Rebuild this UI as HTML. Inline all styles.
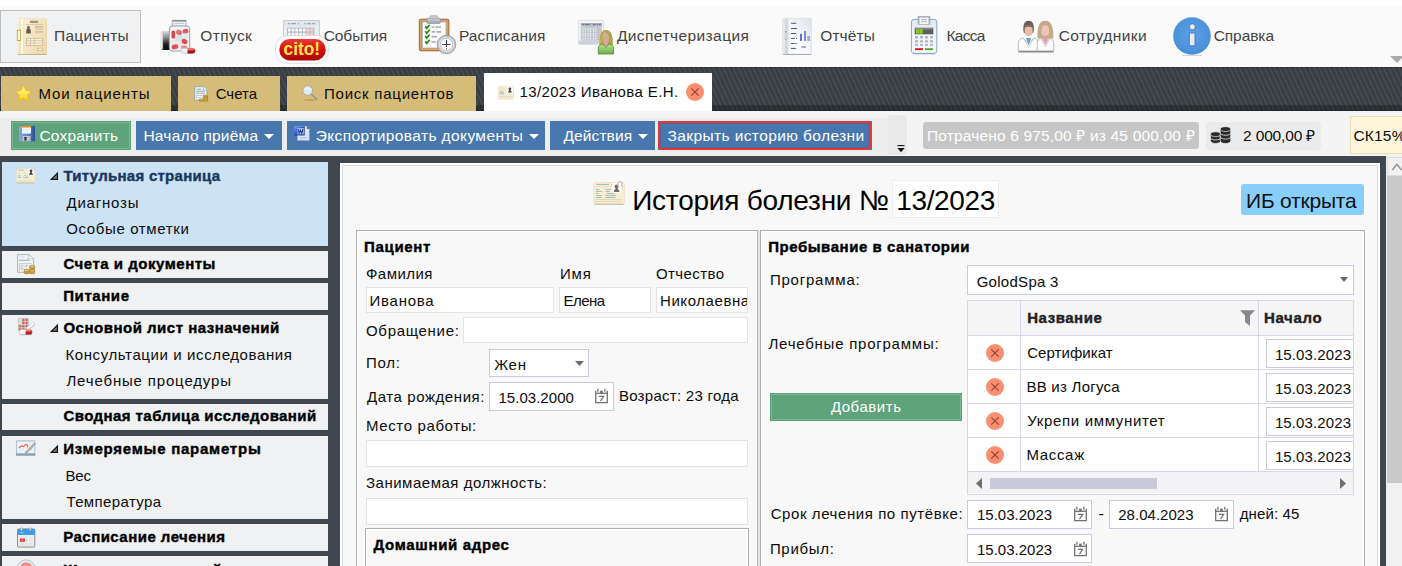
<!DOCTYPE html>
<html lang="ru">
<head>
<meta charset="utf-8">
<title>История болезни № 13/2023</title>
<style>
html,body{margin:0;padding:0;}
body{width:1402px;height:566px;overflow:hidden;position:relative;background:#fff;font-family:'Liberation Sans',sans-serif;}
.a{position:absolute;box-sizing:border-box;}
.t{position:absolute;white-space:pre;line-height:1;font-family:'Liberation Sans',sans-serif;}
svg{position:absolute;overflow:visible;}
.menu{left:0;top:6px;width:1402px;height:61px;background:#fafafa;}
.mact{left:0;top:10px;width:141px;height:53px;background:#f0f1f3;border:1px solid #bdbdbd;}
.band{left:0;top:66.600px;width:1402px;height:44.400px;background-color:#383e44;
 background-image:linear-gradient(rgba(0,0,0,.25) 0,rgba(0,0,0,0) 2px),repeating-linear-gradient(65deg,rgba(255,255,255,0) 0,rgba(255,255,255,0) 2.2px,rgba(255,255,255,.075) 3px,rgba(255,255,255,.075) 3.7px,rgba(255,255,255,0) 4.5px);}
.bandsh{left:0;top:105px;width:1402px;height:6px;background:linear-gradient(rgba(0,0,0,.27) 0,rgba(0,0,0,.27) 4.5px,rgba(0,0,0,.55) 6px);}
.tab{top:76px;height:35px;background:#d6bc79;}
.tabact{top:73px;height:38px;background:#fff;}
.tbar{left:0;top:111px;width:1402px;height:45.200px;background:#f4f4f4;}
.tray{left:0;top:117.800px;width:888px;height:38.400px;background:#ededed;}
.btn{top:121px;height:29px;}
.blue{background:#4877ae;}
.green{background:#5ea37b;box-shadow:inset 0 0 0 1px #5a9f76, inset 0 0 0 2px #7db693;}
.frame{left:0;top:156.200px;width:1387px;height:410px;background:#40474e;}
.li{left:2px;width:326px;background:#f0f1f3;}
.inp{background:#fff;border:1px solid #e3e3e3;}
.cmb{background:#fff;border:1px solid #c9cae0;}
.gb{border:1px solid #aeaeae;box-shadow:inset 0 0 0 1px #fff;}
.hl{height:1px;background:#d5d6e6;}
.vl{width:1px;background:#d5d6e6;}
.x{width:18px;height:18px;border-radius:9px;background:#f98e70;}
</style>
</head>
<body>
<!-- top menu -->
<div class="a menu"></div>
<div class="a mact"></div>
<!-- tab band -->
<div class="a band"></div>
<div class="a bandsh"></div>
<div class="a tab" style="left:1px;width:170px"></div>
<div class="a tab" style="left:178px;width:102px"></div>
<div class="a tab" style="left:287px;width:188.500px"></div>
<div class="a tabact" style="left:483.600px;width:228.800px"></div>
<div class="a x" style="left:686px;top:83px"></div>
<!-- toolbar -->
<div class="a tbar"></div>
<div class="a tray"></div>
<div class="a btn green" style="left:11px;width:120px"></div>
<div class="a btn blue" style="left:136px;width:146px"></div>
<div class="a btn blue" style="left:287px;width:258px"></div>
<div class="a btn blue" style="left:550px;width:105px"></div>
<div class="a btn blue" style="left:657.500px;width:214.500px"></div>
<div class="a" style="left:657.500px;top:121px;width:213.500px;height:28.600px;border:2.200px solid #e2382e;border-radius:4px;box-shadow:inset 0 0 0 1px rgba(110,60,130,.3)"></div>
<div class="a" style="left:888px;top:114.600px;width:18.700px;height:40.800px;background:#e9e9e9;border-radius:0 4px 3px 0"></div>
<div class="a" style="left:923.200px;top:122.300px;width:275.800px;height:26.300px;background:#c6c6c6;border-radius:3px"></div>
<div class="a" style="left:1206px;top:122px;width:115px;height:28px;background:#ebebeb;border-radius:3px"></div>
<div class="a" style="left:1350px;top:116px;width:60px;height:38.400px;background:#fef5da;border:1px solid #ebdfb4"></div>
<!-- dark frame -->
<div class="a frame"></div>
<!-- left list -->
<div class="a li" style="top:162px;height:84.300px;background:#cce2f5"></div>
<div class="a li" style="top:251.200px;height:26.500px"></div>
<div class="a li" style="top:283.200px;height:26.500px"></div>
<div class="a li" style="top:315.200px;height:83.500px"></div>
<div class="a li" style="top:403.700px;height:26.700px"></div>
<div class="a li" style="top:435.700px;height:83px"></div>
<div class="a li" style="top:524.200px;height:26.500px"></div>
<div class="a li" style="top:556.200px;height:20px"></div>
<!-- main panel -->
<div class="a" style="left:340px;top:163px;width:1040.300px;height:410px;background:#fff"></div>
<div class="a" style="left:342.300px;top:165px;width:1036px;height:410px;background:#f8f8f8;border:1px solid #d9d9d9"></div>
<!-- scrollbar -->
<div class="a" style="left:1386px;top:156px;width:16px;height:410px;background:#f1f1f1"></div>
<div class="a" style="left:1386.600px;top:175.800px;width:16px;height:307.500px;background:#c9c9c9"></div>
<div class="a" style="left:1387px;top:157px;width:16px;height:19px;background:#f1f1f1;border:1px solid #dcdcdc"></div>
<!-- title -->
<div class="a" style="left:892.300px;top:180.300px;width:106.500px;height:37.700px;background:#fff;border:1px solid #ececec"></div>
<div class="a" style="left:1241.200px;top:184px;width:122.800px;height:30.700px;background:#87cefa;border-radius:3px"></div>
<!-- patient group -->
<div class="a gb" style="left:356px;top:230px;width:402px;height:345px"></div>
<div class="a inp" style="left:366px;top:287.400px;width:188px;height:26px"></div>
<div class="a inp" style="left:559px;top:287.400px;width:92px;height:26px"></div>
<div class="a inp" style="left:656px;top:287.400px;width:92px;height:26px"></div>
<div class="a inp" style="left:463.400px;top:317.400px;width:284.600px;height:26px"></div>
<div class="a cmb" style="left:489.400px;top:349.400px;width:99.600px;height:27.400px"></div>
<div class="a cmb" style="left:489.400px;top:382.400px;width:124.600px;height:28.200px"></div>
<div class="a inp" style="left:366px;top:440px;width:382px;height:27.400px"></div>
<div class="a inp" style="left:366px;top:497.600px;width:382px;height:27px"></div>
<div class="a gb" style="left:365px;top:528px;width:384px;height:50px"></div>
<div class="a" style="left:758px;top:231px;width:2px;height:340px;background:#e9e9e9"></div>
<!-- stay group -->
<div class="a gb" style="left:760px;top:230px;width:604.500px;height:345px"></div>
<div class="a cmb" style="left:967.400px;top:265.400px;width:386.600px;height:29.200px"></div>
<!-- grid -->
<div class="a" style="left:967.400px;top:300px;width:386.600px;height:194.600px;background:#fff;border:1px solid #d5d6e6"></div>
<div class="a" style="left:968.400px;top:301px;width:384.600px;height:34px;background:#f5f5f6"></div>
<div class="a" style="left:968.400px;top:471.400px;width:384.600px;height:22px;background:#f3f3f6"></div>
<div class="a hl" style="left:968px;top:335px;width:385px"></div>
<div class="a hl" style="left:968px;top:369px;width:385px"></div>
<div class="a hl" style="left:968px;top:403px;width:385px"></div>
<div class="a hl" style="left:968px;top:437px;width:385px"></div>
<div class="a hl" style="left:968px;top:471px;width:385px"></div>
<div class="a vl" style="left:1020px;top:301px;height:170px"></div>
<div class="a vl" style="left:1258px;top:301px;height:170px"></div>
<div class="a x" style="left:986px;top:344px"></div>
<div class="a x" style="left:986px;top:378px"></div>
<div class="a x" style="left:986px;top:412px"></div>
<div class="a x" style="left:986px;top:446px"></div>
<div class="a cmb" style="left:1266.400px;top:339px;width:86.600px;height:28.800px;border-right:0"></div>
<div class="a cmb" style="left:1266.400px;top:373px;width:86.600px;height:28.800px;border-right:0"></div>
<div class="a cmb" style="left:1266.400px;top:407px;width:86.600px;height:28.800px;border-right:0"></div>
<div class="a cmb" style="left:1266.400px;top:441px;width:86.600px;height:28.800px;border-right:0"></div>
<div class="a" style="left:990px;top:478px;width:167px;height:11px;background:#c8cada"></div>
<!-- add button -->
<div class="a green" style="left:770px;top:393px;width:192px;height:28px"></div>
<!-- dates -->
<div class="a cmb" style="left:967.300px;top:500.400px;width:124.500px;height:28.200px"></div>
<div class="a cmb" style="left:1109.400px;top:500.400px;width:124.600px;height:28.200px"></div>
<div class="a cmb" style="left:967.300px;top:534.200px;width:124.500px;height:28.400px"></div>
<!-- ===== menu icons ===== -->
<!-- patients card -->
<svg style="left:17px;top:18px" width="30" height="37" viewBox="0 0 30 37">
<defs><linearGradient id="gcard" x1="0" y1="0" x2="1" y2=".6"><stop offset="0" stop-color="#fdf4de"/><stop offset="1" stop-color="#efdcae"/></linearGradient></defs>
<rect x="0.800" y="0.400" width="28.600" height="36" rx="1" fill="url(#gcard)"/>
<path d="M0.800 36.400h28.600" stroke="#bfae8b" stroke-width="1"/><path d="M29.400 1v35" stroke="#e2cf9f" stroke-width=".7"/><path d="M1 0.500h28" stroke="#eadcb8" stroke-width=".6"/>
<rect x="2.300" y="0.600" width="1.300" height="35.500" fill="#f1e0b6"/><rect x="4.200" y="0.600" width="1.700" height="35.500" fill="#fffdf6"/><rect x="6.300" y="0.600" width="1.200" height="35.500" fill="#f4e5bf"/>
<rect x="0.300" y="12.200" width="3.300" height="10.300" fill="#fbf6e6" stroke="#c9a227" stroke-width=".9"/>
<rect x="13" y="2.800" width="8" height="2.200" fill="#958b76"/><path d="M15 2.800v2.200M17.200 2.800v2.200M19.200 2.800v2.200" stroke="#c9bfa8" stroke-width=".5"/>
<path d="M9 6.600h17" stroke="#cbbf9f" stroke-width=".8"/>
<path d="M9.200 15.600v-3.400q0-1 1-1.200v-1.800q0-1.300 1.300-1.300t1.300 1.300v1.800q1 .2 1 1.200v3.400z" fill="#6b5d4a"/>
<rect x="18" y="8" width="7.900" height="1.900" fill="#cdc3aa"/><rect x="18" y="10.800" width="7.900" height=".9" fill="#cdc3aa"/><rect x="18" y="13" width="7.900" height="1.800" fill="#cdc3aa"/>
<rect x="9.300" y="20.300" width="16.400" height="7.200" fill="#fbf1d8" stroke="#c6b999" stroke-width=".8"/><path d="M9.300 22.700h16.400M9.300 25.100h16.400M13.500 20.300v7.200M17.300 20.300v7.200" stroke="#c6b999" stroke-width=".7" fill="none"/>
<rect x="20.400" y="30.200" width="5.300" height="2.400" fill="#fbf3df" stroke="#c6b999" stroke-width=".8"/>
</svg>
<!-- pills jar -->
<svg style="left:161px;top:19px" width="36" height="36" viewBox="0 0 36 36">
<defs><linearGradient id="gcap" x1="0" y1="0" x2="0" y2="1"><stop offset="0" stop-color="#dcdcdc"/><stop offset=".35" stop-color="#8a8a8a"/><stop offset=".7" stop-color="#1c1c1c"/><stop offset="1" stop-color="#0a0a0a"/></linearGradient>
<linearGradient id="gcaps" x1="0" y1="0" x2="0" y2="1"><stop offset="0" stop-color="#e64a4a"/><stop offset=".5" stop-color="#c81818"/><stop offset="1" stop-color="#8e0c0c"/></linearGradient></defs>
<rect x="0.200" y="12" width="9" height="19" rx="1.500" fill="url(#gcap)"/><rect x="0" y="12.500" width="1.800" height="18" rx=".9" fill="#f4f4f4" stroke="#b0b0b0" stroke-width=".4"/>
<rect x="11.200" y="1.400" width="13.800" height="6" rx="1" fill="#eef1f4" stroke="#9aa3ad" stroke-width=".8"/><rect x="11" y="1.200" width="14.200" height="1.400" rx=".6" fill="#767e88"/>
<path d="M12.500 4.500h11" stroke="#c5ccd4" stroke-width="1"/>
<path d="M8.300 10q0-3 3-3h14.400q3 0 3 3v19q0 3-3 3h-14.400q-3 0-3-3z" fill="#f1f3f6" stroke="#8b97a8" stroke-width=".9"/>
<g>
<rect x="10.500" y="11.500" width="3.600" height="8" rx="1.600" fill="#d9464c"/><rect x="15" y="11" width="6" height="5" rx="2.200" fill="#e26e73" transform="rotate(25 18 13.500)"/><rect x="21.500" y="10" width="6" height="4.600" rx="2.200" fill="#e0585e" transform="rotate(-15 24.500 12.300)"/>
<rect x="20" y="14.500" width="6.500" height="5.500" rx="2.500" fill="#e9ecef" stroke="#c3c8ce" stroke-width=".4"/><rect x="14.500" y="17" width="6" height="5" rx="2.300" fill="#dfe3e7" stroke="#c3c8ce" stroke-width=".4"/>
<rect x="20.500" y="20" width="6" height="5" rx="2.300" fill="#dd4f55" transform="rotate(20 23.500 22.500)"/><rect x="10.500" y="21" width="5" height="4.600" rx="2.200" fill="#eceff2" stroke="#c3c8ce" stroke-width=".4"/>
<rect x="10.500" y="25.500" width="7" height="4.600" rx="2.200" fill="#de5359" transform="rotate(-12 14 27.800)"/><rect x="17" y="23.500" width="5" height="4.400" rx="2.100" fill="#e6e9ec" stroke="#c3c8ce" stroke-width=".4"/><rect x="20" y="26.500" width="6.500" height="4" rx="2" fill="#e88c90"/>
</g>
<rect x="20" y="29.200" width="14.200" height="5.300" rx="2.650" fill="#eef0f2" stroke="#aab0b8" stroke-width=".5"/><path d="M26.500 29.200h5.050a2.650 2.650 0 0 1 0 5.300h-5.050z" fill="url(#gcaps)"/>
<path d="M21.500 30.600h11" stroke="rgba(255,255,255,.55)" stroke-width=".8"/>
</svg>
<!-- calendar + cito -->
<svg style="left:283px;top:20px" width="38" height="22" viewBox="0 0 38 22">
<rect x="0.500" y="0.500" width="36" height="21" fill="#e9edf2" stroke="#c9ced6"/>
<rect x="1" y="1" width="35" height="5" fill="#e1e6ec"/>
<path d="M5 3.700h2M8 3.700h5M15 3.700h1M21 3.700h1.500M24 3.700h4M29 3.700h3" stroke="#9099a5" stroke-width="1"/>
<rect x="4" y="7.600" width="27.400" height="14" fill="#b7bdc6"/>
<rect x="5.0" y="8.6" width="2.700" height="2.900" fill="#f6f8fa"/><rect x="8.7" y="8.6" width="2.700" height="2.900" fill="#f6f8fa"/><rect x="12.4" y="8.6" width="2.700" height="2.900" fill="#f6f8fa"/><rect x="16.1" y="8.6" width="2.700" height="2.900" fill="#f6f8fa"/><rect x="19.8" y="8.6" width="2.700" height="2.900" fill="#f6f8fa"/><rect x="23.5" y="8.6" width="2.700" height="2.900" fill="#fbd3d6"/><rect x="27.2" y="8.6" width="2.700" height="2.900" fill="#fbd3d6"/><rect x="5.0" y="12.8" width="2.700" height="2.900" fill="#f6f8fa"/><rect x="8.7" y="12.8" width="2.700" height="2.900" fill="#f6f8fa"/><rect x="12.4" y="12.8" width="2.700" height="2.900" fill="#f6f8fa"/><rect x="16.1" y="12.8" width="2.700" height="2.900" fill="#f6f8fa"/><rect x="19.8" y="12.8" width="2.700" height="2.900" fill="#f6f8fa"/><rect x="23.5" y="12.8" width="2.700" height="2.900" fill="#fbd3d6"/><rect x="27.2" y="12.8" width="2.700" height="2.900" fill="#fbd3d6"/><rect x="5.0" y="17.0" width="2.700" height="2.900" fill="#f6f8fa"/><rect x="8.7" y="17.0" width="2.700" height="2.900" fill="#f6f8fa"/><rect x="12.4" y="17.0" width="2.700" height="2.900" fill="#f6f8fa"/><rect x="16.1" y="17.0" width="2.700" height="2.900" fill="#f6f8fa"/><rect x="19.8" y="17.0" width="2.700" height="2.900" fill="#f6f8fa"/><rect x="23.5" y="17.0" width="2.700" height="2.900" fill="#fbd3d6"/><rect x="27.2" y="17.0" width="2.700" height="2.900" fill="#fbd3d6"/>
</svg>
<svg style="left:275px;top:35px" width="54" height="29" viewBox="0 0 54 29">
<defs><linearGradient id="gcito" x1="0" y1="0" x2="0" y2="1"><stop offset="0" stop-color="#ee3b33"/><stop offset=".5" stop-color="#d4100e"/><stop offset="1" stop-color="#a90606"/></linearGradient></defs>
<rect x="0.700" y="0.700" width="52.600" height="27.600" rx="11" fill="#fdfdfd" stroke="#dcdcdc" stroke-width=".9"/>
<rect x="4.300" y="4" width="46.400" height="21.400" rx="10.500" fill="url(#gcito)"/>
<text x="8.600" y="19.500" font-family="'Liberation Sans',sans-serif" font-weight="700" font-size="18" fill="#fde64a" textLength="36.500" lengthAdjust="spacingAndGlyphs">cito!</text>
</svg>
<!-- clipboard + clock -->
<svg style="left:419px;top:16px" width="38" height="39" viewBox="0 0 38 39">
<defs><linearGradient id="gclip" x1="0" y1="0" x2="0" y2="1"><stop offset="0" stop-color="#d3d6da"/><stop offset="1" stop-color="#9ea3a9"/></linearGradient></defs>
<rect x="0.300" y="3.200" width="29.600" height="31.600" rx="1.500" fill="#c98c4e" stroke="#9a6230" stroke-width=".9"/>
<rect x="1.600" y="4.500" width="27" height="29" rx="1" fill="none" stroke="#dfa96c" stroke-width=".8"/>
<rect x="3.400" y="6" width="23.600" height="26" fill="#fcfcfd" stroke="#b3bfcc" stroke-width=".9"/>
<rect x="8" y="2.200" width="13.300" height="5.200" rx="1" fill="url(#gclip)" stroke="#80868d" stroke-width=".6"/><rect x="11" y="-0.300" width="7.600" height="3.200" rx=".8" fill="#c9ccd0" stroke="#8c9197" stroke-width=".5"/>
<g stroke="#27890f" stroke-width="1.700" fill="none"><path d="M6.200 10.400l1.600 2 2.900-3.600"/><path d="M6.200 15.200l1.600 2 2.900-3.600"/><path d="M6.200 20.100l1.600 2 2.900-3.600"/><path d="M6.200 25.400l1.600 2 2.900-3.600"/></g>
<g stroke="#a9acb0" stroke-width="1.700"><path d="M12.500 11h3M16.500 11h5.500M12.500 15.800h3.500M17.500 15.800h4.500M12.500 20.700h5.500M12.500 26h4.500"/></g>
<circle cx="27.500" cy="28.500" r="9.300" fill="#c3c6ca" stroke="#8f9398" stroke-width=".8"/><circle cx="27.500" cy="28.500" r="7.600" fill="#e4e6e8"/>
<circle cx="27.500" cy="28.500" r="6.200" fill="#fdfdfd" stroke="#a5a9ae" stroke-width=".6"/>
<path d="M27.500 23.800v7.500M23.300 28.500h8.200" stroke="#2e2e2e" stroke-width=".9" fill="none"/><circle cx="27.500" cy="32.800" r=".6" fill="#333"/>
</svg>
<!-- calendar + woman -->
<svg style="left:578px;top:20px" width="37" height="35" viewBox="0 0 37 35">
<defs><linearGradient id="gwom" x1="0" y1="0" x2="0" y2="1"><stop offset="0" stop-color="#b9e48c"/><stop offset="1" stop-color="#6fae4c"/></linearGradient></defs>
<rect x="0.500" y="0.400" width="25.200" height="24" rx=".8" fill="#f3f5f7" stroke="#d3d7dc" stroke-width=".8"/>
<rect x="1" y="20.800" width="24.200" height="3.400" fill="#cdd1d6"/>
<rect x="2.800" y="3" width="21.200" height="17.700" fill="#c3c9d1"/>
<rect x="2.800" y="3" width="21.200" height="2.800" fill="#aab1bb"/>
<path d="M4.500 4.400h1.500M7 4.400h4.500M15 4.400h2.500M19 4.400h1M21 4.400h1.500" stroke="#5f6670" stroke-width=".9"/>
<rect x="4.6" y="8.2" width="1.100" height="1.100" fill="#fbfcfd"/><rect x="6.8" y="8.2" width="1.100" height="1.100" fill="#fbfcfd"/><rect x="9.8" y="8.2" width="1.100" height="1.100" fill="#fbfcfd"/><rect x="12" y="8.2" width="1.100" height="1.100" fill="#fbfcfd"/><rect x="15" y="8.2" width="1.100" height="1.100" fill="#fbfcfd"/><rect x="17.2" y="8.2" width="1.100" height="1.100" fill="#fbfcfd"/><rect x="20.2" y="8.2" width="1.100" height="1.100" fill="#f0a3a8"/><rect x="4.6" y="10.4" width="1.100" height="1.100" fill="#fbfcfd"/><rect x="6.8" y="10.4" width="1.100" height="1.100" fill="#fbfcfd"/><rect x="9.8" y="10.4" width="1.100" height="1.100" fill="#fbfcfd"/><rect x="12" y="10.4" width="1.100" height="1.100" fill="#fbfcfd"/><rect x="15" y="10.4" width="1.100" height="1.100" fill="#fbfcfd"/><rect x="17.2" y="10.4" width="1.100" height="1.100" fill="#fbfcfd"/><rect x="20.2" y="10.4" width="1.100" height="1.100" fill="#f0a3a8"/><rect x="4.6" y="13.2" width="1.100" height="1.100" fill="#fbfcfd"/><rect x="6.8" y="13.2" width="1.100" height="1.100" fill="#fbfcfd"/><rect x="9.8" y="13.2" width="1.100" height="1.100" fill="#fbfcfd"/><rect x="12" y="13.2" width="1.100" height="1.100" fill="#fbfcfd"/><rect x="15" y="13.2" width="1.100" height="1.100" fill="#fbfcfd"/><rect x="17.2" y="13.2" width="1.100" height="1.100" fill="#fbfcfd"/><rect x="20.2" y="13.2" width="1.100" height="1.100" fill="#f0a3a8"/><rect x="4.6" y="15.4" width="1.100" height="1.100" fill="#fbfcfd"/><rect x="6.8" y="15.4" width="1.100" height="1.100" fill="#fbfcfd"/><rect x="9.8" y="15.4" width="1.100" height="1.100" fill="#fbfcfd"/><rect x="12" y="15.4" width="1.100" height="1.100" fill="#fbfcfd"/><rect x="15" y="15.4" width="1.100" height="1.100" fill="#fbfcfd"/><rect x="17.2" y="15.4" width="1.100" height="1.100" fill="#fbfcfd"/><rect x="20.2" y="15.4" width="1.100" height="1.100" fill="#f0a3a8"/><rect x="4.6" y="18.2" width="1.100" height="1.100" fill="#fbfcfd"/><rect x="6.8" y="18.2" width="1.100" height="1.100" fill="#fbfcfd"/><rect x="9.8" y="18.2" width="1.100" height="1.100" fill="#fbfcfd"/><rect x="12" y="18.2" width="1.100" height="1.100" fill="#fbfcfd"/><rect x="15" y="18.2" width="1.100" height="1.100" fill="#fbfcfd"/><rect x="17.2" y="18.2" width="1.100" height="1.100" fill="#fbfcfd"/><rect x="20.2" y="18.2" width="1.100" height="1.100" fill="#f0a3a8"/>
<path d="M21.600 25.500q-.8-15.500 6.500-15.500t6.700 15.500z" fill="#b3a04e"/><path d="M23 24q0-11 5-12" stroke="#d1c06c" stroke-width="1" fill="none"/>
<path d="M25 17.500q0-4.700 2.900-4.700t2.900 4.700q0 5-1.300 6.500v2h-3.200v-2q-1.300-1.500-1.300-6.500z" fill="#dba99c"/>
<path d="M20.300 34v-5.500q0-4 4.600-4.600l3 3.600 3-3.600q4.600.6 4.600 4.600v5.500z" fill="url(#gwom)" stroke="#4f8a35" stroke-width=".8"/>
<path d="M27.900 24.500v4" stroke="#c68e82" stroke-width=".8"/>
</svg>
<!-- report -->
<svg style="left:783px;top:18px" width="30" height="38" viewBox="0 0 30 38">
<defs><linearGradient id="grep" x1="1" y1="0" x2="0" y2="1"><stop offset="0" stop-color="#dde3e9"/><stop offset=".5" stop-color="#f7f8fa"/><stop offset="1" stop-color="#ffffff"/></linearGradient>
<linearGradient id="grep2" x1="0" y1="0" x2="1" y2="0"><stop offset="0" stop-color="#eef0f3"/><stop offset=".6" stop-color="#cdd3d9"/><stop offset="1" stop-color="#e4e8ec"/></linearGradient></defs>
<rect x="-0.400" y="0.400" width="28.700" height="35.800" rx=".8" fill="url(#grep)" stroke="#d5d9de" stroke-width=".7"/>
<path d="M0 36.500h28.300" stroke="#a9adb2" stroke-width="1"/>
<rect x="0" y="0.800" width="5.800" height="35.200" fill="url(#grep2)"/>
<path d="M2.800 13v1.500M2.800 20.500v1" stroke="#666" stroke-width=".8"/>
<g stroke="#4f565e" stroke-width="1"><path d="M8 5.300h5.200M8 10.500h6M8 15.500h5.400M8 20.400h4M13 20.400h1M8 25.500h3.500M12.300 25.500h1.500M8 30.400h5.200"/></g>
<rect x="17" y="15.900" width="2" height="7" fill="#686ec0"/><rect x="21" y="13" width="2" height="9.900" fill="#8388dc"/><rect x="24.200" y="18" width="2.800" height="4.900" fill="#a3a7ea"/>
<rect x="18.400" y="28.200" width="4.600" height="1.600" fill="#9aa0a8"/>
</svg>
<!-- calculator -->
<svg style="left:911px;top:16px" width="27" height="39" viewBox="0 0 27 39">
<defs><linearGradient id="gcalc" x1="0" y1="0" x2="0" y2="1"><stop offset="0" stop-color="#dbe8f4"/><stop offset=".4" stop-color="#eef3f8"/><stop offset="1" stop-color="#f6f8fb"/></linearGradient></defs>
<rect x="0.400" y="3.400" width="25.400" height="34" rx="2.600" fill="url(#gcalc)" stroke="#7d9ec2" stroke-width=".9"/>
<path d="M2 37.800h22" stroke="#8aa0b8" stroke-width=".8"/>
<rect x="7" y="0.300" width="12" height="8" fill="#b5b7ba" stroke="#9a9da0" stroke-width=".5"/>
<rect x="8.600" y="1.700" width="8.800" height="6.200" fill="#fafafa"/><path d="M10 3.600h6M10 5.600h6" stroke="#aeb1b5" stroke-width="1"/>
<rect x="4" y="12" width="18" height="6" fill="#5e5f60" stroke="#48494a" stroke-width=".5"/><path d="M4.300 12.800h17.400" stroke="#c9cbcd" stroke-width=".6"/>
<rect x="4.800" y="13.200" width="7" height="4.300" fill="#6f9f2a"/><path d="M5.600 13v4.800M7.400 13v4.800M9.300 13v4.800M11 13v4.800" stroke="#a6ea2e" stroke-width=".8"/>
<rect x="4" y="20" width="3" height="2.5" fill="#b4b8bd"/><rect x="9" y="20" width="3" height="2.5" fill="#b4b8bd"/><rect x="14" y="20" width="3" height="2.5" fill="#b4b8bd"/><rect x="19" y="20" width="3" height="2.5" fill="#b4b8bd"/><rect x="4" y="24.2" width="3" height="2.3" fill="#b4b8bd"/><rect x="9" y="24.2" width="3" height="2.3" fill="#b4b8bd"/><rect x="14" y="24.2" width="3" height="2.3" fill="#b4b8bd"/><rect x="19" y="24.2" width="3" height="2.3" fill="#b4b8bd"/><rect x="4" y="27.9" width="3" height="2" fill="#b4b8bd"/><rect x="9" y="27.9" width="3" height="2" fill="#b4b8bd"/><rect x="14" y="27.9" width="3" height="2" fill="#b4b8bd"/><rect x="19" y="27.9" width="3" height="2" fill="#b4b8bd"/>
<rect x="4" y="32.200" width="8" height="1.900" fill="#dc1a1a"/><rect x="14" y="32.200" width="8" height="1.900" fill="#56a82c"/>
</svg>
<!-- two doctors -->
<svg style="left:1018px;top:21px" width="37" height="33" viewBox="0 0 37 33">
<path d="M5.300 9q-.5-9.200 5.300-9.200t5.300 9.200l-.6 3h-9.400z" fill="#6d5d5a"/>
<path d="M6.600 8q0-4 4-4t4 4v3.500q0 3.400-4 3.400t-4-3.400z" fill="#e9bcab"/>
<path d="M6.300 7q1-3 4.300-3t4.300 3q-1.500-1.500-4.300-1.500t-4.300 1.500z" fill="#6d5d5a"/>
<path d="M0.300 30v-7.500q0-4.500 5-5.500l5.300 6 5.300-6q4.300 1 4.300 5.500v7.500z" fill="#fbfbfb" stroke="#a9a9a9" stroke-width=".8"/>
<path d="M8 17l2.600 7.500 2.600-7.500z" fill="#6f9fce"/><path d="M5.500 17.500l5.100 9 5.100-9" stroke="#c5c5c5" stroke-width=".8" fill="none"/>
<path d="M19.400 17.500q-.8-17.700 7.900-17.700t8 17.700z" fill="#c2ab8a"/>
<path d="M23.400 9q0-4.800 3.800-4.800t3.800 4.800v2.500q0 3.400-3.800 3.400t-3.800-3.400z" fill="#ecc5b4"/>
<path d="M19.200 30v-7.500q0-4.500 4.500-5.500l3.700 6 3.700-6q4.600 1 4.600 5.500v7.500z" fill="#fbfbfb" stroke="#a9a9a9" stroke-width=".8"/>
<path d="M24.800 17l2.600 7 2.600-7z" fill="#e79aac"/><path d="M23 17.500l4.400 8.500 4.400-8.500" stroke="#c5c5c5" stroke-width=".8" fill="none"/>
<path d="M0.500 30.800h35" stroke="#8a8a8a" stroke-width="1.500"/>
</svg>
<!-- info -->
<svg style="left:1172.700px;top:17.400px" width="38" height="39" viewBox="0 0 38 39">
<defs><radialGradient id="ginfo" cx=".5" cy=".45" r=".6"><stop offset="0" stop-color="#5d9fe2"/><stop offset=".8" stop-color="#4b92db"/><stop offset="1" stop-color="#3f87d3"/></radialGradient></defs>
<path d="M9 38.300h20" stroke="#c8c8c8" stroke-width=".9"/>
<circle cx="19" cy="19" r="18.800" fill="url(#ginfo)"/>
<circle cx="19.300" cy="9.800" r="3.100" fill="#ececec" stroke="#3d7dc8" stroke-width="1"/>
<rect x="16.300" y="16" width="5.700" height="12.800" fill="#ebebeb" stroke="#3d7dc8" stroke-width="1"/>
</svg>
<svg style="left:1390px;top:56px" width="14" height="8" viewBox="0 0 14 8"><path d="M0 0h14l-7 7z" fill="#ababab"/></svg>
<!-- ===== tab icons ===== -->
<svg style="left:15.400px;top:84.700px" width="17" height="17" viewBox="0 0 17 17"><defs><linearGradient id="gstar" x1="0" y1="0" x2="0" y2="1"><stop offset="0" stop-color="#fff3b0"/><stop offset=".45" stop-color="#ffe960"/><stop offset="1" stop-color="#ffdc08"/></linearGradient></defs><path d="M8.50 0.70L11.03 5.32L16.20 6.30L12.59 10.13L13.26 15.35L8.50 13.10L3.74 15.35L4.41 10.13L0.80 6.30L5.97 5.32z" fill="url(#gstar)" stroke="#eabc28" stroke-width="1" stroke-linejoin="round"/></svg>
<svg style="left:194px;top:85.500px" width="15" height="16" viewBox="0 0 15 16">
<path d="M0.600 0.600h8.900l3.500 3.500v10.100h-12.400z" fill="#e6eff3" stroke="#8fa0a9" stroke-width=".8"/><path d="M9.500 0.600v3.500h3.500" fill="#f8fbfc" stroke="#8fa0a9" stroke-width=".6"/>
<path d="M2.300 3.200h.8M3.800 3.200h3M2.300 5.200h8.500M2.300 7.200h3M6.500 7.200h4" stroke="#8d999f" stroke-width=".8"/>
<rect x="2.800" y="9.500" width="7" height="2.300" fill="#f4f8fa" stroke="#a9b8c0" stroke-width=".6"/>
<g fill="#b88f2c" stroke="#8f6c1c" stroke-width=".4"><rect x="9.500" y="9" width="4.300" height="2.100" rx="1"/><rect x="9.500" y="11.100" width="4.300" height="2.100" rx="1"/><rect x="9.500" y="13.200" width="4.300" height="2.100" rx="1"/><rect x="5.200" y="13" width="4.300" height="2.300" rx="1"/></g>
<path d="M10.300 9.800h2.700M10.300 11.900h2.700M10.300 14h2.700M6 13.900h2.700" stroke="#ecd07a" stroke-width=".7"/>
</svg>
<svg style="left:301.500px;top:85px" width="16" height="16" viewBox="0 0 16 16">
<ellipse cx="8" cy="15" rx="6.500" ry=".9" fill="rgba(120,100,50,.25)"/>
<path d="M9.300 9.200l5.200 4.900" stroke="#9a9a98" stroke-width="1.700" stroke-linecap="round"/>
<circle cx="5.700" cy="5.500" r="4.900" fill="#e2eaea" stroke="#ada58f" stroke-width="1"/><path d="M2.300 4.300q3.400-1 6.800 0" stroke="#f7fafa" stroke-width="1" fill="none"/>
</svg>
<svg style="left:498.200px;top:85.500px" width="16" height="13.500" viewBox="0 0 16 13.500">
<rect x="0.300" y="0.300" width="15.200" height="12.900" rx="1.200" fill="#f4ead0" stroke="#ebdfbf" stroke-width=".6"/>
<path d="M1.600 6h4.300M1.600 7.800h4.300" stroke="#86b3ba" stroke-width=".8"/><path d="M2 3.800h4" stroke="#e6dcc2" stroke-width=".7"/>
<rect x="8.800" y="0.600" width="6.300" height="6.800" rx=".6" fill="#fdfcf8"/>
<path d="M10 6.600q0-1.700 1.200-2v-.4q-.7-.5-.7-1.400 0-1.300 1.400-1.300t1.400 1.300q0 .9-.7 1.400v.4q1.200.3 1.200 2z" fill="#4a4a4a"/>
<path d="M1.800 10.700h12" stroke="#e3d9bd" stroke-width=".9"/>
</svg>
<!-- close x in tab -->
<svg style="left:686px;top:83px" width="18" height="18" viewBox="0 0 18 18"><path d="M5.300 5.300l7.400 7.400M12.700 5.300l-7.400 7.400" stroke="#93402f" stroke-width="1.150" fill="none"/></svg>
<!-- ===== toolbar icons ===== -->
<svg style="left:19px;top:125.600px" width="16" height="15.200" viewBox="0 0 16 15.200">
<defs><linearGradient id="gflop" x1="0" y1="0" x2="1" y2="0"><stop offset="0" stop-color="#86a8de"/><stop offset=".55" stop-color="#5f86cc"/><stop offset="1" stop-color="#2a4c9a"/></linearGradient></defs>
<rect x="0" y="0" width="16" height="15.200" rx=".8" fill="url(#gflop)"/>
<rect x="3" y="0" width="9" height="7.600" fill="#f4f5f8"/><rect x="3" y="0" width="9" height="1.500" fill="#f08a1c"/>
<path d="M3.500 3.500h8M3.500 5.300h8" stroke="#dcdfe6" stroke-width=".6"/>
<rect x="3.500" y="10" width="8" height="5.200" fill="#c4c6ca"/><rect x="5.300" y="11" width="2.300" height="3.600" fill="#34363c"/>
</svg>
<svg style="left:294px;top:126.400px" width="16" height="15" viewBox="0 0 16 15">
<defs><linearGradient id="gword" x1="0" y1="0" x2="1" y2="1"><stop offset="0" stop-color="#7fa2ee"/><stop offset=".5" stop-color="#2f55cc"/><stop offset="1" stop-color="#1d3da8"/></linearGradient></defs>
<path d="M3.400 0.300h9.500l2.400 2.400v11.800h-11.900z" fill="#dbe3f9" stroke="#9aa8d0" stroke-width=".5"/><path d="M12.900 0.300l2.400 2.400h-2.400z" fill="#4a4f60"/>
<path d="M5.500 11.500h8M5.500 13h6" stroke="#aebbe0" stroke-width=".7"/>
<rect x="0" y="0.300" width="10.500" height="9" fill="url(#gword)"/>
<rect x="3.500" y="2.200" width="6.200" height="6.200" fill="#b9cbf2"/>
<path d="M4.200 3.200l1 4.200 1.300-3.200 1.300 3.200 1.100-4.200" stroke="#1f3da0" stroke-width="1.100" fill="none"/>
<path d="M10.500 9.300v-9" stroke="rgba(40,40,60,.45)" stroke-width=".8"/><path d="M0 9.300h10.500" stroke="rgba(40,40,60,.35)" stroke-width=".8"/>
</svg>
<svg style="left:264px;top:133.500px" width="10" height="5" viewBox="0 0 10 5"><path d="M0 0h10l-5 5z" fill="#fff"/></svg>
<svg style="left:528.500px;top:133.500px" width="10" height="5" viewBox="0 0 10 5"><path d="M0 0h10l-5 5z" fill="#fff"/></svg>
<svg style="left:637.500px;top:133.500px" width="10" height="5" viewBox="0 0 10 5"><path d="M0 0h10l-5 5z" fill="#fff"/></svg>
<svg style="left:896.500px;top:145px" width="8" height="8" viewBox="0 0 8 8"><path d="M0.500 0.600h7" stroke="#111" stroke-width="1.100"/><path d="M0.300 3h7.400L4 7.300z" fill="#111"/></svg>
<!-- coins -->
<svg style="left:1209.600px;top:125.900px" width="21.400" height="18.400" viewBox="0 0 21 18">
<g fill="#2a2a2a" stroke="#f0f0f0" stroke-width=".7">
<path d="M0.500 8v6.500c0 1.600 2.200 2.600 5 2.600s5-1 5-2.600V8z"/><ellipse cx="5.500" cy="8" rx="5" ry="2.300"/>
<path d="M10 3v11.500c0 1.600 2.300 2.700 5.200 2.700s5.200-1.100 5.200-2.700V3z"/><ellipse cx="15.200" cy="3" rx="5.200" ry="2.400"/>
</g>
<g stroke="#e8e8e8" stroke-width=".8" fill="none"><path d="M0.500 11.200c0 1.600 2.200 2.500 5 2.500s5-.9 5-2.500M10 6.500c0 1.600 2.300 2.600 5.200 2.600s5.200-1 5.200-2.600M10 10.200c0 1.600 2.300 2.600 5.200 2.600s5.200-1 5.200-2.600"/></g>
</svg>
<!-- ===== left panel icons ===== -->
<svg style="left:16.300px;top:167.500px" width="20" height="16" viewBox="0 0 20 16">
<rect x="0.300" y="0.800" width="18.600" height="14" rx="1.200" fill="#f6edd3" stroke="#e6dab8" stroke-width=".6"/><path d="M0.800 15h17.600" stroke="#b9b39e" stroke-width=".8"/>
<path d="M2.500 2.200h5.500" stroke="#9fc3c5" stroke-width=".8"/><path d="M2 5h2M7.500 5h3" stroke="#c9d6cf" stroke-width=".7"/>
<path d="M1.800 8.300q1.500-1.500 3 0M1.800 9.500h3.500M7.500 8.500l2-1.500 1 1.500 2-1M7.500 9.800h5" stroke="#8bb8bf" stroke-width=".8" fill="none"/>
<path d="M1.800 13h15.500" stroke="#e0d6b6" stroke-width=".8"/>
<rect x="12" y="0.500" width="5.900" height="7" fill="#fcfbf7"/>
<path d="M13 6.800q0-1.800 1.300-2.100v-.4q-.7-.5-.7-1.400 0-1.300 1.400-1.300t1.400 1.300q0 .9-.7 1.400v.4q1.300.3 1.300 2.100z" fill="#3f3f3f"/>
<circle cx="17.300" cy="0.900" r="1.300" fill="#f2f2f2" stroke="#b5b5b5" stroke-width=".5"/>
</svg>
<svg style="left:50px;top:172.200px" width="8" height="8" viewBox="0 0 8 8"><path d="M7.400 1.300v6.100H1.300z" fill="#7d7d7d" stroke="#111" stroke-width="1.200" stroke-linejoin="miter"/></svg>
<svg style="left:50px;top:324.300px" width="8" height="8" viewBox="0 0 8 8"><path d="M7.400 1.300v6.100H1.300z" fill="#7d7d7d" stroke="#111" stroke-width="1.200" stroke-linejoin="miter"/></svg>
<svg style="left:50px;top:444.500px" width="8" height="8" viewBox="0 0 8 8"><path d="M7.400 1.300v6.100H1.300z" fill="#7d7d7d" stroke="#111" stroke-width="1.200" stroke-linejoin="miter"/></svg>
<svg style="left:17px;top:254px" width="19" height="21" viewBox="0 0 19 21">
<path d="M0.600 0.600h11.400l4.600 4.600v13.100h-16z" fill="#eff4f4" stroke="#9fb0b0" stroke-width=".9"/><path d="M12 0.600q.3 3.500-1 4 2.500.6 5.600 0z" fill="#fbfdfd" stroke="#9fb0b0" stroke-width=".6"/>
<path d="M2.500 3h1M4.500 3h3" stroke="#b9c6c6" stroke-width=".7"/><path d="M2.300 6.200h10.500" stroke="#8e9c9c" stroke-width="1.100" stroke-dasharray="2.500 .6"/>
<path d="M2.500 9.500h12M2.500 12h9M2.500 14.500h5M2.500 9.500v7.500M5 9.500v7.500M9.500 9.500v4" stroke="#b4c3c3" stroke-width=".7" fill="none"/>
<g fill="#c29b3b" stroke="#9a7522" stroke-width=".5"><rect x="12.600" y="11.400" width="5.100" height="4.200" rx="1"/><rect x="7.200" y="15.300" width="5.100" height="4.400" rx="1"/><rect x="12.600" y="15.600" width="5.100" height="4.100" rx="1"/></g>
<path d="M13.400 12.500h3.500M8 16.400h3.500M13.400 16.700h3.500" stroke="#ecd386" stroke-width=".9"/>
</svg>
<svg style="left:18px;top:318px" width="17" height="18" viewBox="0 0 17 18">
<defs><linearGradient id="gcps" x1="0" y1="0" x2="0" y2="1"><stop offset="0" stop-color="#f06060"/><stop offset=".5" stop-color="#d42020"/><stop offset="1" stop-color="#a81414"/></linearGradient></defs>
<rect x="0.300" y="0.200" width="10.300" height="12.800" rx="1" fill="#d9d9d9" stroke="#b0b0b0" stroke-width=".5"/>
<circle cx="2.2" cy="2.0" r="1.250" fill="#f4f4f4" stroke="rgba(120,60,50,.35)" stroke-width=".3"/><circle cx="5.4" cy="2.0" r="1.250" fill="#db6e5e" stroke="rgba(120,60,50,.35)" stroke-width=".3"/><circle cx="8.6" cy="2.0" r="1.250" fill="#db6e5e" stroke="rgba(120,60,50,.35)" stroke-width=".3"/><circle cx="2.2" cy="5.1" r="1.250" fill="#f4f4f4" stroke="rgba(120,60,50,.35)" stroke-width=".3"/><circle cx="5.4" cy="5.1" r="1.250" fill="#db6e5e" stroke="rgba(120,60,50,.35)" stroke-width=".3"/><circle cx="8.6" cy="5.1" r="1.250" fill="#db6e5e" stroke="rgba(120,60,50,.35)" stroke-width=".3"/><circle cx="2.2" cy="8.2" r="1.250" fill="#db6e5e" stroke="rgba(120,60,50,.35)" stroke-width=".3"/><circle cx="5.4" cy="8.2" r="1.250" fill="#db6e5e" stroke="rgba(120,60,50,.35)" stroke-width=".3"/><circle cx="8.6" cy="8.2" r="1.250" fill="#db6e5e" stroke="rgba(120,60,50,.35)" stroke-width=".3"/><circle cx="2.2" cy="11.3" r="1.250" fill="#db6e5e" stroke="rgba(120,60,50,.35)" stroke-width=".3"/><circle cx="5.4" cy="11.3" r="1.250" fill="#db6e5e" stroke="rgba(120,60,50,.35)" stroke-width=".3"/><circle cx="8.6" cy="11.3" r="1.250" fill="#db6e5e" stroke="rgba(120,60,50,.35)" stroke-width=".3"/>
<path d="M9.800 10.600l5.300-4.300" stroke="#b9bec6" stroke-width="3.600" stroke-linecap="round"/><path d="M9.800 10.300l5.300-4.300" stroke="#f4f5f7" stroke-width="2.400" stroke-linecap="round"/>
<rect x="1.100" y="11.400" width="13.100" height="5.100" rx="2.550" fill="#f2f3f4" stroke="#a9adb3" stroke-width=".5"/><path d="M7.600 11.400h4.050a2.550 2.550 0 0 1 0 5.100h-4.050z" fill="url(#gcps)"/>
<path d="M2.500 12.700h10" stroke="rgba(255,255,255,.6)" stroke-width=".8"/><path d="M2 16.900h11.500" stroke="rgba(90,90,90,.35)" stroke-width=".6"/>
</svg>
<svg style="left:16px;top:440px" width="20" height="16" viewBox="0 0 20 16">
<rect x="0.400" y="0.600" width="18.400" height="14.600" fill="#eef2f5" stroke="#a9bcc9" stroke-width=".9"/><rect x="0" y="0.200" width="19.200" height="1.600" fill="#c3d3de"/><rect x="0" y="13.300" width="19.200" height="2.300" fill="#8ba1b1"/>
<path d="M2.500 12l12-9" stroke="#d5dde3" stroke-width=".7"/>
<path d="M3 8.300q1-2 2.200-2.200t1.800.2 1.500-.8 2-1 1.500 2.800" stroke="#f0512f" stroke-width="1.100" fill="none"/>
<path d="M9.500 13.200l9.700-10" stroke="#8f969e" stroke-width="2.200"/><path d="M10.300 12.400l8.300-8.600" stroke="#e9c9cd" stroke-width=".9"/><circle cx="15" cy="9.300" r=".8" fill="#f0a830"/>
</svg>
<svg style="left:17px;top:527.500px" width="19" height="20" viewBox="0 0 19 20">
<rect x="0.500" y="1" width="17.300" height="18" rx="1.200" fill="#e9eff1" stroke="#8c7d7b" stroke-width=".9"/>
<path d="M0.300 2.200q0-1.500 1.500-1.500h14.700q1.500 0 1.500 1.500v4.800h-17.700z" fill="#3f9be6"/>
<path d="M3 4.800h3.500" stroke="#9fd0f7" stroke-width="1"/>
<rect x="3.600" y="-0.300" width="1.700" height="3" rx=".8" fill="#e9e4d8" stroke="#8a8576" stroke-width=".4"/><rect x="12.300" y="-0.300" width="1.700" height="3" rx=".8" fill="#e9e4d8" stroke="#8a8576" stroke-width=".4"/>
<rect x="2.700" y="8.700" width="12.800" height="8.300" fill="#dfe6e8"/><path d="M2.700 10.500h12.800M2.700 13.800h12.800M7.800 8.700v8.300M11.700 8.700v8.300" stroke="#f5f8f9" stroke-width=".8"/>
<rect x="2.900" y="10.500" width="5" height="3.300" fill="#e3342f"/><path d="M4 12.100h2.500" stroke="#f7b0ad" stroke-width=".7"/>
</svg>
<svg style="left:17px;top:559px" width="19" height="19" viewBox="0 0 19 19"><circle cx="9.100" cy="9.500" r="8.600" fill="#eef1f4" stroke="#aebccb" stroke-width="1"/><circle cx="9.100" cy="9.500" r="6.300" fill="#f08e8e"/></svg>
<!-- ===== title icon ===== -->
<svg style="left:593px;top:181px" width="32" height="24" viewBox="0 0 32 24">
<rect x="0.700" y="1.600" width="30.800" height="21.500" rx="2" fill="#f6edd3" stroke="#eadfbe" stroke-width=".7"/><path d="M1.500 23.300h29.500" stroke="#c3bba4" stroke-width="1"/>
<path d="M3.500 3.500h12.500M18 3.500h1.500" stroke="#86b8bf" stroke-width=".8"/><path d="M2.500 5.500h17" stroke="#e7dcbc" stroke-width=".7"/>
<path d="M3 8.5h3.5M12.5 8.5h5.5" stroke="#7fb0b8" stroke-width=".75"/><path d="M3 10.5h6M12.5 10.5h4" stroke="#7fb0b8" stroke-width=".75"/><path d="M3 12.5h3M13.5 12.5h8" stroke="#7fb0b8" stroke-width=".75"/><path d="M3 14.5h5.5M12.5 14.5h10.5" stroke="#7fb0b8" stroke-width=".75"/><path d="M3 16.5h6M12.5 16.5h10" stroke="#7fb0b8" stroke-width=".75"/>
<path d="M2.500 18.500h26M2.500 20.500h26" stroke="#e0d5b4" stroke-width=".9"/>
<rect x="19.400" y="2" width="8.900" height="9.800" fill="#fdfcfa"/>
<path d="M20.800 11q0-2.600 1.800-3v-.6q-1-.7-1-2 0-1.900 2-1.900t2 1.900q0 1.300-1 2v.6q1.800.4 1.800 3z" fill="#6c6c6c"/>
<path d="M25 6v-3.500q0-2 2-2t2 2v4" stroke="#bdbdbd" stroke-width="1.100" fill="none"/>
</svg>
<!-- ===== form glyphs ===== -->
<svg style="left:575px;top:361px" width="9" height="5" viewBox="0 0 9 5"><path d="M0 0h9L4.500 5z" fill="#6a6a6a"/></svg>
<svg style="left:1340px;top:277px" width="8" height="5" viewBox="0 0 8 5"><path d="M0 0h8L4 5z" fill="#6a6a6a"/></svg>
<!-- calendar glyphs -->
<svg style="left:594.800px;top:389px" width="13" height="15" viewBox="0 0 13 15"><g><path d="M0.700 1.700v12h11.600v-12" stroke="#727272" stroke-width="1.300" fill="#fff"/><path d="M0.700 4.300h11.600" stroke="#727272" stroke-width="1.300"/><path d="M2.900 -0.300v3M9.900 -0.300v3" stroke="#727272" stroke-width="1.300"/><rect x="5.100" y="1.600" width="2.600" height="2.700" fill="#727272"/><path d="M3.900 7.300h4.700l-3.100 4.900" stroke="#727272" stroke-width="1.250" fill="none"/></g></svg>
<svg style="left:1073.600px;top:507.400px" width="13" height="15" viewBox="0 0 13 15"><g><path d="M0.700 1.700v12h11.600v-12" stroke="#727272" stroke-width="1.300" fill="#fff"/><path d="M0.700 4.300h11.600" stroke="#727272" stroke-width="1.300"/><path d="M2.900 -0.300v3M9.900 -0.300v3" stroke="#727272" stroke-width="1.300"/><rect x="5.100" y="1.600" width="2.600" height="2.700" fill="#727272"/><path d="M3.900 7.300h4.700l-3.100 4.900" stroke="#727272" stroke-width="1.250" fill="none"/></g></svg>
<svg style="left:1214.900px;top:507.400px" width="13" height="15" viewBox="0 0 13 15"><g><path d="M0.700 1.700v12h11.600v-12" stroke="#727272" stroke-width="1.300" fill="#fff"/><path d="M0.700 4.300h11.600" stroke="#727272" stroke-width="1.300"/><path d="M2.900 -0.300v3M9.900 -0.300v3" stroke="#727272" stroke-width="1.300"/><rect x="5.100" y="1.600" width="2.600" height="2.700" fill="#727272"/><path d="M3.900 7.300h4.700l-3.100 4.900" stroke="#727272" stroke-width="1.250" fill="none"/></g></svg>
<svg style="left:1073.600px;top:541.700px" width="13" height="15" viewBox="0 0 13 15"><g><path d="M0.700 1.700v12h11.600v-12" stroke="#727272" stroke-width="1.300" fill="#fff"/><path d="M0.700 4.300h11.600" stroke="#727272" stroke-width="1.300"/><path d="M2.900 -0.300v3M9.900 -0.300v3" stroke="#727272" stroke-width="1.300"/><rect x="5.100" y="1.600" width="2.600" height="2.700" fill="#727272"/><path d="M3.900 7.300h4.700l-3.100 4.900" stroke="#727272" stroke-width="1.250" fill="none"/></g></svg>
<!-- filter -->
<svg style="left:1240px;top:310px" width="15" height="16" viewBox="0 0 15 16"><path d="M0 0.300h15L10 5.600v10.400L5 12V5.600z" fill="#888"/></svg>
<!-- grid row x marks -->
<svg style="left:986px;top:344px" width="18" height="18" viewBox="0 0 18 18"><path d="M5.300 5.300l7.400 7.400M12.700 5.300l-7.400 7.400" stroke="#93402f" stroke-width="1.150" fill="none"/></svg>
<svg style="left:986px;top:378px" width="18" height="18" viewBox="0 0 18 18"><path d="M5.300 5.300l7.400 7.400M12.700 5.300l-7.400 7.400" stroke="#93402f" stroke-width="1.150" fill="none"/></svg>
<svg style="left:986px;top:412px" width="18" height="18" viewBox="0 0 18 18"><path d="M5.300 5.300l7.400 7.400M12.700 5.300l-7.400 7.400" stroke="#93402f" stroke-width="1.150" fill="none"/></svg>
<svg style="left:986px;top:446px" width="18" height="18" viewBox="0 0 18 18"><path d="M5.300 5.300l7.400 7.400M12.700 5.300l-7.400 7.400" stroke="#93402f" stroke-width="1.150" fill="none"/></svg>
<!-- h scrollbar arrows -->
<svg style="left:976px;top:478px" width="6" height="11" viewBox="0 0 6 11"><path d="M6 0v11L0 5.500z" fill="#6e6e6e"/></svg>
<svg style="left:1339.500px;top:478px" width="6" height="11" viewBox="0 0 6 11"><path d="M0 0v11L6 5.500z" fill="#6e6e6e"/></svg>
<!-- v scrollbar chevron -->
<svg style="left:1391.700px;top:163.300px" width="12" height="8" viewBox="0 0 12 8"><path d="M0.300 7L4.900 1.300l4.600 5.700" stroke="#9a9a9a" stroke-width="1.700" fill="none"/></svg>

<span class="t" style="left:54.00px;top:27.98px;font-size:15.5px;color:#424242;letter-spacing:0.289px;">Пациенты</span>
<span class="t" style="left:200.24px;top:27.98px;font-size:15.5px;color:#424242;letter-spacing:0.396px;">Отпуск</span>
<span class="t" style="left:323.68px;top:27.98px;font-size:15.5px;color:#424242;letter-spacing:-0.077px;">События</span>
<span class="t" style="left:458.88px;top:27.98px;font-size:15.5px;color:#424242;letter-spacing:0.149px;">Расписания</span>
<span class="t" style="left:616.88px;top:27.98px;font-size:15.5px;color:#424242;letter-spacing:0.421px;">Диспетчеризация</span>
<span class="t" style="left:820.24px;top:27.98px;font-size:15.5px;color:#424242;letter-spacing:0.108px;">Отчёты</span>
<span class="t" style="left:946.44px;top:27.98px;font-size:15.5px;color:#424242;letter-spacing:-0.695px;">Касса</span>
<span class="t" style="left:1058.68px;top:27.98px;font-size:15.5px;color:#424242;letter-spacing:0.456px;">Сотрудники</span>
<span class="t" style="left:1213.68px;top:27.98px;font-size:15.5px;color:#424242;letter-spacing:-0.077px;">Справка</span>
<span class="t" style="left:38.44px;top:85.90px;font-size:15px;color:#0c0c0c;letter-spacing:0.889px;">Мои пациенты</span>
<span class="t" style="left:215.68px;top:85.90px;font-size:15px;color:#0c0c0c;">Счета</span>
<span class="t" style="left:324.00px;top:85.90px;font-size:15px;color:#0c0c0c;letter-spacing:0.761px;">Поиск пациентов</span>
<span class="t" style="left:519.44px;top:83.90px;font-size:15px;color:#0c0c0c;letter-spacing:0.380px;">13/2023 Иванова Е.Н.</span>
<span class="t" style="left:39.44px;top:127.88px;font-size:15.5px;color:#fff;letter-spacing:0.197px;">Сохранить</span>
<span class="t" style="left:143.44px;top:127.88px;font-size:15.5px;color:#fff;letter-spacing:0.232px;">Начало приёма</span>
<span class="t" style="left:315.68px;top:127.88px;font-size:15.5px;color:#fff;letter-spacing:0.396px;">Экспортировать документы</span>
<span class="t" style="left:563.44px;top:127.88px;font-size:15.5px;color:#fff;letter-spacing:0.111px;">Действия</span>
<span class="t" style="left:667.44px;top:127.88px;font-size:15.5px;color:#fff;letter-spacing:0.399px;">Закрыть историю болезни</span>
<span class="t" style="left:926.88px;top:127.88px;font-size:15.5px;color:#fff;letter-spacing:0.170px;">Потрачено 6 975,00 ₽ из 45 000,00 ₽</span>
<span class="t" style="left:1243.00px;top:127.88px;font-size:15.5px;color:#0c0c0c;letter-spacing:-0.136px;">2 000,00 ₽</span>
<span class="t" style="left:1353.44px;top:127.88px;font-size:15.5px;color:#0c0c0c;letter-spacing:0.195px;">СК15%</span>
<span class="t" style="left:63.44px;top:168.30px;font-size:15px;font-weight:700;-webkit-text-stroke:.4px #17375e;color:#17375e;letter-spacing:0.269px;">Титульная страница</span>
<span class="t" style="left:66.44px;top:195.30px;font-size:15px;color:#0c0c0c;letter-spacing:0.797px;">Диагнозы</span>
<span class="t" style="left:66.24px;top:221.30px;font-size:15px;color:#0c0c0c;letter-spacing:0.629px;">Особые отметки</span>
<span class="t" style="left:63.44px;top:256.30px;font-size:15px;font-weight:700;-webkit-text-stroke:.4px #000;color:#000;letter-spacing:0.514px;">Счета и документы</span>
<span class="t" style="left:63.24px;top:288.30px;font-size:15px;font-weight:700;-webkit-text-stroke:.4px #000;color:#000;letter-spacing:0.570px;">Питание</span>
<span class="t" style="left:63.44px;top:319.90px;font-size:15px;font-weight:700;-webkit-text-stroke:.4px #000;color:#000;letter-spacing:0.503px;">Основной лист назначений</span>
<span class="t" style="left:65.44px;top:346.90px;font-size:15px;color:#0c0c0c;letter-spacing:0.607px;">Консультации и исследования</span>
<span class="t" style="left:66.44px;top:372.90px;font-size:15px;color:#0c0c0c;letter-spacing:0.836px;">Лечебные процедуры</span>
<span class="t" style="left:63.44px;top:408.30px;font-size:15px;font-weight:700;-webkit-text-stroke:.4px #000;color:#000;letter-spacing:0.436px;">Сводная таблица исследований</span>
<span class="t" style="left:63.24px;top:440.90px;font-size:15px;font-weight:700;-webkit-text-stroke:.4px #000;color:#000;letter-spacing:0.759px;">Измеряемые параметры</span>
<span class="t" style="left:65.44px;top:467.90px;font-size:15px;color:#0c0c0c;letter-spacing:-0.110px;">Вес</span>
<span class="t" style="left:66.44px;top:494.30px;font-size:15px;color:#0c0c0c;letter-spacing:0.378px;">Температура</span>
<span class="t" style="left:63.24px;top:529.00px;font-size:15px;font-weight:700;-webkit-text-stroke:.4px #000;color:#000;letter-spacing:0.469px;">Расписание лечения</span>
<span class="t" style="left:63.44px;top:561.90px;font-size:15px;font-weight:700;-webkit-text-stroke:.4px #000;color:#000;letter-spacing:0.611px;">Журнал назначений</span>
<span class="t" style="left:632.22px;top:187.30px;font-size:28px;color:#000;letter-spacing:-0.236px;">История болезни №</span>
<span class="t" style="left:896.34px;top:187.30px;font-size:28px;color:#000;letter-spacing:-0.390px;">13/2023</span>
<span class="t" style="left:1246.02px;top:189.92px;font-size:21px;color:#111;letter-spacing:-0.211px;">ИБ открыта</span>
<span class="t" style="left:364.00px;top:238.90px;font-size:15px;font-weight:700;-webkit-text-stroke:.4px #000;color:#000;letter-spacing:0.683px;">Пациент</span>
<span class="t" style="left:366.00px;top:266.30px;font-size:15px;color:#0c0c0c;letter-spacing:0.463px;">Фамилия</span>
<span class="t" style="left:560.00px;top:266.30px;font-size:15px;color:#0c0c0c;letter-spacing:0.830px;">Имя</span>
<span class="t" style="left:656.00px;top:266.30px;font-size:15px;color:#0c0c0c;letter-spacing:0.397px;">Отчество</span>
<span class="t" style="left:369.44px;top:292.90px;font-size:15px;color:#0c0c0c;letter-spacing:0.763px;">Иванова</span>
<span class="t" style="left:563.44px;top:292.90px;font-size:15px;color:#0c0c0c;letter-spacing:-0.495px;">Елена</span>
<span class="t" style="left:660.00px;top:292.90px;font-size:15px;color:#0c0c0c;letter-spacing:0.580px;width:87.00px;overflow:hidden;">Николаевна</span>
<span class="t" style="left:366.00px;top:323.30px;font-size:15px;color:#0c0c0c;letter-spacing:0.691px;">Обращение:</span>
<span class="t" style="left:366.00px;top:355.30px;font-size:15px;color:#0c0c0c;letter-spacing:0.740px;">Пол:</span>
<span class="t" style="left:494.24px;top:356.90px;font-size:15px;color:#0c0c0c;letter-spacing:0.710px;">Жен</span>
<span class="t" style="left:367.00px;top:388.90px;font-size:15px;color:#0c0c0c;letter-spacing:0.574px;">Дата рождения:</span>
<span class="t" style="left:498.44px;top:389.90px;font-size:15px;color:#0c0c0c;letter-spacing:0.038px;">15.03.2000</span>
<span class="t" style="left:618.88px;top:388.30px;font-size:15px;color:#0c0c0c;letter-spacing:0.276px;">Возраст: 23 года</span>
<span class="t" style="left:366.00px;top:417.90px;font-size:15px;color:#0c0c0c;letter-spacing:0.622px;">Место работы:</span>
<span class="t" style="left:366.00px;top:475.00px;font-size:15px;color:#0c0c0c;letter-spacing:0.511px;">Занимаемая должность:</span>
<span class="t" style="left:373.56px;top:537.30px;font-size:15px;font-weight:700;-webkit-text-stroke:.4px #000;color:#000;letter-spacing:0.666px;">Домашний адрес</span>
<span class="t" style="left:768.24px;top:238.90px;font-size:15px;font-weight:700;-webkit-text-stroke:.4px #000;color:#000;letter-spacing:0.544px;">Пребывание в санатории</span>
<span class="t" style="left:769.88px;top:272.30px;font-size:15px;color:#0c0c0c;letter-spacing:0.789px;">Программа:</span>
<span class="t" style="left:976.68px;top:273.90px;font-size:15px;color:#0c0c0c;letter-spacing:0.282px;">GolodSpa 3</span>
<span class="t" style="left:1027.24px;top:309.90px;font-size:15px;font-weight:700;-webkit-text-stroke:.4px #222;color:#222;letter-spacing:0.540px;">Название</span>
<span class="t" style="left:1264.00px;top:309.90px;font-size:15px;font-weight:700;-webkit-text-stroke:.4px #222;color:#222;letter-spacing:0.644px;">Начало</span>
<span class="t" style="left:768.44px;top:336.30px;font-size:15px;color:#0c0c0c;letter-spacing:0.766px;">Лечебные программы:</span>
<span class="t" style="left:1027.24px;top:345.30px;font-size:15px;color:#0c0c0c;letter-spacing:0.047px;">Сертификат</span>
<span class="t" style="left:1026.44px;top:378.90px;font-size:15px;color:#0c0c0c;letter-spacing:0.253px;">ВВ из Логуса</span>
<span class="t" style="left:1027.24px;top:412.90px;font-size:15px;color:#0c0c0c;letter-spacing:0.665px;">Укрепи иммунитет</span>
<span class="t" style="left:1026.44px;top:446.90px;font-size:15px;color:#0c0c0c;letter-spacing:0.668px;">Массаж</span>
<span class="t" style="left:1274.88px;top:347.30px;font-size:15px;color:#0c0c0c;letter-spacing:0.127px;width:77.12px;overflow:hidden;">15.03.2023</span>
<span class="t" style="left:1274.88px;top:381.30px;font-size:15px;color:#0c0c0c;letter-spacing:0.127px;width:77.12px;overflow:hidden;">15.03.2023</span>
<span class="t" style="left:1274.88px;top:415.30px;font-size:15px;color:#0c0c0c;letter-spacing:0.127px;width:77.12px;overflow:hidden;">15.03.2023</span>
<span class="t" style="left:1274.88px;top:449.30px;font-size:15px;color:#0c0c0c;letter-spacing:0.127px;width:77.12px;overflow:hidden;">15.03.2023</span>
<span class="t" style="left:830.88px;top:399.30px;font-size:15px;color:#fff;letter-spacing:0.540px;">Добавить</span>
<span class="t" style="left:770.68px;top:506.30px;font-size:15px;color:#0c0c0c;letter-spacing:0.579px;">Срок лечения по путёвке:</span>
<span class="t" style="left:977.00px;top:507.30px;font-size:15px;color:#0c0c0c;">15.03.2023</span>
<span class="t" style="left:1098.24px;top:505.21px;font-size:17px;color:#0c0c0c;">-</span>
<span class="t" style="left:1118.24px;top:507.30px;font-size:15px;color:#0c0c0c;letter-spacing:0.024px;">28.04.2023</span>
<span class="t" style="left:1239.66px;top:505.90px;font-size:15px;color:#0c0c0c;letter-spacing:0.126px;">дней: 45</span>
<span class="t" style="left:769.88px;top:541.10px;font-size:15px;color:#0c0c0c;letter-spacing:0.690px;">Прибыл:</span>
<span class="t" style="left:977.00px;top:541.90px;font-size:15px;color:#0c0c0c;">15.03.2023</span>
</body>
</html>
